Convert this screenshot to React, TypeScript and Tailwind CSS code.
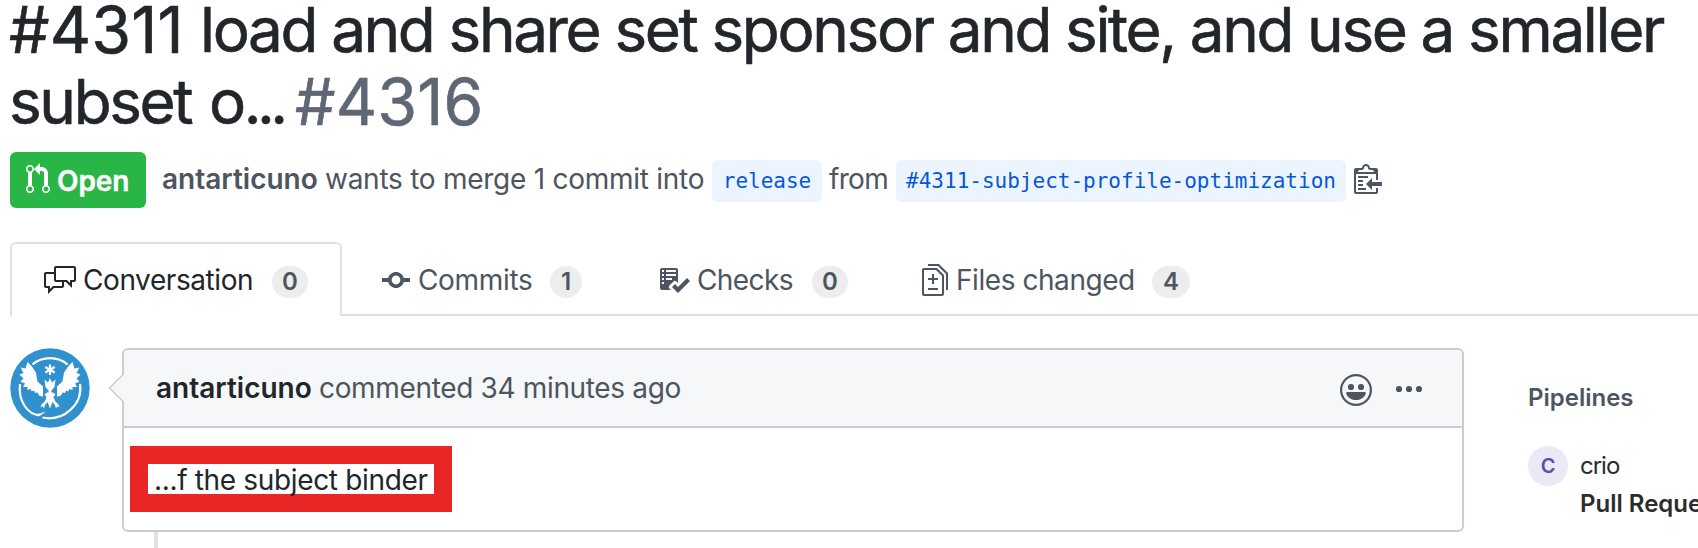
import type { ReactNode } from "react";

function Octicon({ d, w = 16, className = "" }: { d: string; w?: number; className?: string }) {
  return (
    <svg viewBox={`0 0 ${w} 16`} width={w * 2} height={32} fill="currentColor" fillRule="evenodd" className={`block shrink-0 ${className}`}>
      <path d={d} />
    </svg>
  );
}

const paths = {
  pullRequest:
    "M11 11.28V5c-.03-.78-.34-1.47-.94-2.06C9.46 2.35 8.78 2.03 8 2H7V0L4 3l3 3V4h1c.27.02.48.11.69.31.21.2.3.42.31.69v6.28A1.993 1.993 0 0010 15a1.993 1.993 0 001-3.72zm-1 2.92c-.66 0-1.2-.55-1.2-1.2 0-.65.55-1.2 1.2-1.2.65 0 1.2.55 1.2 1.2 0 .65-.55 1.2-1.2 1.2zM4 3c0-1.11-.89-2-2-2a1.993 1.993 0 00-1 3.72v6.56A1.993 1.993 0 002 15a1.993 1.993 0 001-3.72V4.72c.59-.34 1-.98 1-1.72zm-.8 10c0 .66-.55 1.2-1.2 1.2-.65 0-1.2-.55-1.2-1.2 0-.65.55-1.2 1.2-1.2.65 0 1.2.55 1.2 1.2zM2 4.2C1.34 4.2.8 3.65.8 3c0-.65.55-1.2 1.2-1.2.65 0 1.2.55 1.2 1.2 0 .65-.55 1.2-1.2 1.2z",
  discussion:
    "M15 1H6c-.55 0-1 .45-1 1v2H1c-.55 0-1 .45-1 1v6c0 .55.45 1 1 1h1v3l3-3h4c.55 0 1-.45 1-1V9h1l3 3V9h1c.55 0 1-.45 1-1V2c0-.55-.45-1-1-1zM9 11H4.5L3 12.5V11H1V5h4v3c0 .55.45 1 1 1h3v2zm6-3h-2v1.5L11.5 8H6V2h9v6z",
  commit:
    "M10.86 7c-.45-1.72-2-3-3.86-3-1.86 0-3.41 1.28-3.86 3H0v2h3.14c.45 1.72 2 3 3.86 3 1.86 0 3.41-1.28 3.86-3H14V7h-3.14zM7 10.2c-1.22 0-2.2-.98-2.2-2.2 0-1.22.98-2.2 2.2-2.2 1.22 0 2.2.98 2.2 2.2 0 1.22-.98 2.2-2.2 2.2z",
  checklist:
    "M16 8.5l-6 6-3-3L8.5 10l1.5 1.5L14.5 7 16 8.5zM5.7 12.2l.8.8H2c-.55 0-1-.45-1-1V3c0-.55.45-1 1-1h7c.55 0 1 .45 1 1v6.5l-.8-.8c-.39-.39-1.03-.39-1.42 0L5.7 10.8a.996.996 0 000 1.41v-.01zM4 4h5V3H4v1zm0 2h5V5H4v1zm0 2h3V7H4v1zM3 9H2v1h1V9zm0-2H2v1h1V7zm0-2H2v1h1V5zm0-2H2v1h1V3z",
  diff:
    "M6 7h2v1H6v2H5V8H3V7h2V5h1v2zm-3 6h5v-1H3v1zM7.5 2L11 5.5V15c0 .55-.45 1-1 1H1c-.55 0-1-.45-1-1V3c0-.55.45-1 1-1h6.5zM10 6L7 3H1v12h9V6zM8.5 0H3v1h5l4 4v8h1V4.5L8.5 0z",
  clippy:
    "M2 13h4v1H2v-1zm5-6H2v1h5V7zm2 3V8l-3 3 3 3v-2h5v-2H9zM4.5 9H2v1h2.5V9zM2 12h2.5v-1H2v1zm9 1h1v2c-.02.28-.11.52-.3.7-.19.18-.42.28-.7.3H1c-.55 0-1-.45-1-1V4c0-.55.45-1 1-1h3c0-1.11.89-2 2-2 1.11 0 2 .89 2 2h3c.55 0 1 .45 1 1v5h-1V6H1v9h10v-2zM2 5h8c0-.55-.45-1-1-1H8c-.55 0-1-.45-1-1s-.45-1-1-1-1 .45-1 1-.45 1-1 1H3c-.55 0-1 .45-1 1z",
};

function Branch({ children, className }: { children: ReactNode; className: string }) {
  return (
    <span className={`mt-[2px] flex h-[42px] shrink-0 items-center justify-center rounded-md bg-[#ecf5ff] pt-[2px] font-['DejaVu_Sans_Mono',monospace] text-[21px] text-[#0558d6] ${className}`}>
      {children}
    </span>
  );
}

function Counter({ children, className }: { children: ReactNode; className: string }) {
  return (
    <span className={`mt-1 flex h-8 shrink-0 items-center justify-center rounded-full bg-[#ededed] text-2xl leading-8 font-semibold text-[#4d5560] ${className}`}>
      {children}
    </span>
  );
}

function Wing() {
  return (
    <path
      d="M17.500 14L21.500 18L26 24.500L27.500 33.500L33 38.500L33 48.800L29 47.500L27.500 44.500L25 45L24 42.500L21.500 43.500L21 41L17.500 42L17.500 39L13 39L15 35.500L10.500 33.500L13.500 30.500L9.500 26.500L13.500 25L10.700 19.500L15.500 20.500Z"
      fill="#fff"
    />
  );
}

function Avatar() {
  return (
    <svg viewBox="0 0 80 80" className="block size-20 shrink-0">
      <circle cx="40" cy="40" r="39.700" fill="#3190ce" />
      <g fill="none" stroke="#fff" strokeWidth="2.200" strokeLinecap="butt">
        <path d="M22.500 16.500C32 8 48 8 57.500 16.500" />
        <path d="M10 36C8 52 17 67 30 67" />
        <path d="M70 36C73 56 54 74 32.500 69.500" />
      </g>
      <path d="M26 66.500L36 63.500L29.500 68.200L26 68Z" fill="#fff" />
      <Wing />
      <g transform="translate(80 0) scale(-1 1)">
        <Wing />
      </g>
      <path d="M40 16.500v10.500M35.300 19l9.400 5.500M44.700 19l-9.400 5.500" stroke="#fff" strokeWidth="2.200" />
      <path d="M34.500 31.500L38 34.500L40 30L42 34.500L45.500 31.500L44.500 39L42 42H38L35.500 39Z" fill="#fff" />
      <path d="M37 44.500H43L45.500 46.500L43.500 49L45 53L48.500 56.500L49.500 59.500L47.300 58.300L46 60.500L45 57L42.500 54L40 60.500L37.500 54L35 57L34 60.500L32.700 58.300L30.500 59.500L31.500 56.500L35 53L36.500 49L34.500 46.500Z" fill="#fff" />
      <path d="M38.500 41.500H41.500V45H38.500Z" fill="#fff" />
    </svg>
  );
}

export default function App() {
  return (
    <div className="h-[548px] w-[1698px] overflow-hidden bg-white font-[Inter,sans-serif] text-[28px] whitespace-nowrap text-[#4d5560]">
      <h1 className="-mt-[6px] pl-[9px] text-[62px] leading-[72px] text-[#22262a] [-webkit-text-stroke:0.6px]">
        <div className="flex h-[72px] tracking-[-2.370px]">
          <span className="w-[191px] text-[64px] tracking-[0.250px]">#4311</span>
          <span>load and share set sponsor and site, and use a smaller</span>
        </div>
        <div className="flex h-[72px] tracking-[-2.370px]">
          <span className="w-[200px]">subset</span>
          <span className="w-[86px]">
            o<span className="tracking-[-4.600px]">...</span>
          </span>
          <span className="text-[64px] tracking-[0.250px] text-[#5e6773]">#4316</span>
        </div>
      </h1>

      <div className="mt-[14px] flex h-14 items-center pl-[10px]">
        <span className="flex h-14 w-[136px] shrink-0 items-center rounded-md bg-[#2ab647] pl-4 font-semibold text-white">
          <Octicon d={paths.pullRequest} w={12} className="-mt-[2px]" />
          <span className="ml-[7px] pt-px tracking-[-0.100px] [-webkit-text-stroke:0.4px]">Open</span>
        </span>
        <span className="ml-4 w-[163px] shrink-0 pb-[2px] font-semibold">antarticuno</span>
        <span className="w-[387px] shrink-0 pb-[2px] tracking-[-0.260px]">wants to merge 1 commit into</span>
        <Branch className="w-[110px]">release</Branch>
        <span className="ml-[7px] w-[67px] shrink-0 pb-[2px] tracking-[-0.700px]">from</span>
        <Branch className="w-[450px]">#4311-subject-profile-optimization</Branch>
        <Octicon d={paths.clippy} w={14} className="-mt-1 ml-2" />
      </div>

      <nav className="mt-[34px] flex h-[74px] pl-[10px]">
        <a className="flex w-[332px] shrink-0 items-center rounded-t-md border-2 border-b-0 border-[#dde0e5] pl-8 text-[#22262a]">
          <Octicon d={paths.discussion} />
          <span className="ml-[7px] w-[189px] tracking-[-0.420px]">Conversation</span>
          <Counter className="w-9">0</Counter>
        </a>
        <div className="flex flex-1 items-center border-b-2 border-[#dde0e5] pt-1 pl-10">
          <Octicon d={paths.commit} w={14} />
          <span className="ml-2 w-[132px] tracking-[-0.330px]">Commits</span>
          <Counter className="w-8">1</Counter>
          <Octicon d={paths.checklist} className="ml-[76px]" />
          <span className="ml-[7px] w-[115px] tracking-[-0.600px]">Checks</span>
          <Counter className="w-9">0</Counter>
          <Octicon d={paths.diff} w={13} className="ml-[74px]" />
          <span className="ml-2 w-[196px] tracking-[-0.440px]">Files changed</span>
          <Counter className="w-[38px]">4</Counter>
        </div>
      </nav>

      <main className="mt-8 flex h-[200px] pl-[10px]">
        <Avatar />
        <div className="relative ml-8 w-[1342px] shrink-0">
          <article className="h-[184px] overflow-hidden rounded-md border-2 border-[#c9ccd5]">
            <header className="flex h-[78px] items-center border-b-2 border-[#c9ccd5] bg-[#f5f7f9] pl-8">
              <span className="w-[163px] font-semibold text-[#22262a]">antarticuno</span>
              <span className="tracking-[-0.340px]">commented 34 minutes ago</span>
              <svg viewBox="0 0 32 32" className="mt-1 mr-[21px] ml-auto block size-8 shrink-0">
                <circle cx="16" cy="16" r="14.900" fill="none" stroke="currentColor" strokeWidth="2.200" />
                <circle cx="11" cy="13" r="3.100" fill="currentColor" />
                <circle cx="21" cy="13" r="3.100" fill="currentColor" />
                <path d="M7 18H25C26 18 26 19 25.600 20C24 24 20 26 16 26C12 26 8 24 6.400 20C6 19 6 18 7 18Z" fill="currentColor" />
              </svg>
              <svg viewBox="0 0 32 32" className="mt-[2px] mr-[37px] block size-8 shrink-0" fill="currentColor">
                <circle cx="6" cy="16" r="3.100" />
                <circle cx="16" cy="16" r="3.100" />
                <circle cx="26" cy="16" r="3.100" />
              </svg>
            </header>
            <div className="pt-[18px] pl-[6px]">
              <p className="h-[66px] w-[322px] border-[18px] border-[#e92626] pl-[6px] leading-[32px] tracking-[-0.340px] text-[#22262a]">
                ...f the subject binder
              </p>
            </div>
          </article>
          <div className="ml-8 h-4 w-1 bg-[#dfe2e7]" />
          <svg viewBox="0 0 16 30" className="absolute top-[25px] -left-[14px] block h-[30px] w-4">
            <path d="M16 0.500L1.500 15L16 29.500Z" fill="#f5f7f9" />
            <path d="M15.500 1L1.500 15L15.500 29" fill="none" stroke="#c9ccd5" strokeWidth="1.500" />
          </svg>
        </div>
        <aside className="ml-16 flex-1 text-2xl">
          <h2 className="mt-[34px] h-8 font-semibold">Pipelines</h2>
          <div className="mt-8 flex h-10 items-center">
            <span className="flex size-10 shrink-0 items-center justify-center rounded-full bg-[#ebe9f6] text-xl font-semibold text-[#5252b3]">C</span>
            <span className="ml-3 tracking-[-1px] text-[#2a2c2e]">crio</span>
          </div>
          <p className="mt-[2px] pl-[52px] font-semibold text-[#2a2c2e]">Pull Reque</p>
        </aside>
      </main>
    </div>
  );
}
